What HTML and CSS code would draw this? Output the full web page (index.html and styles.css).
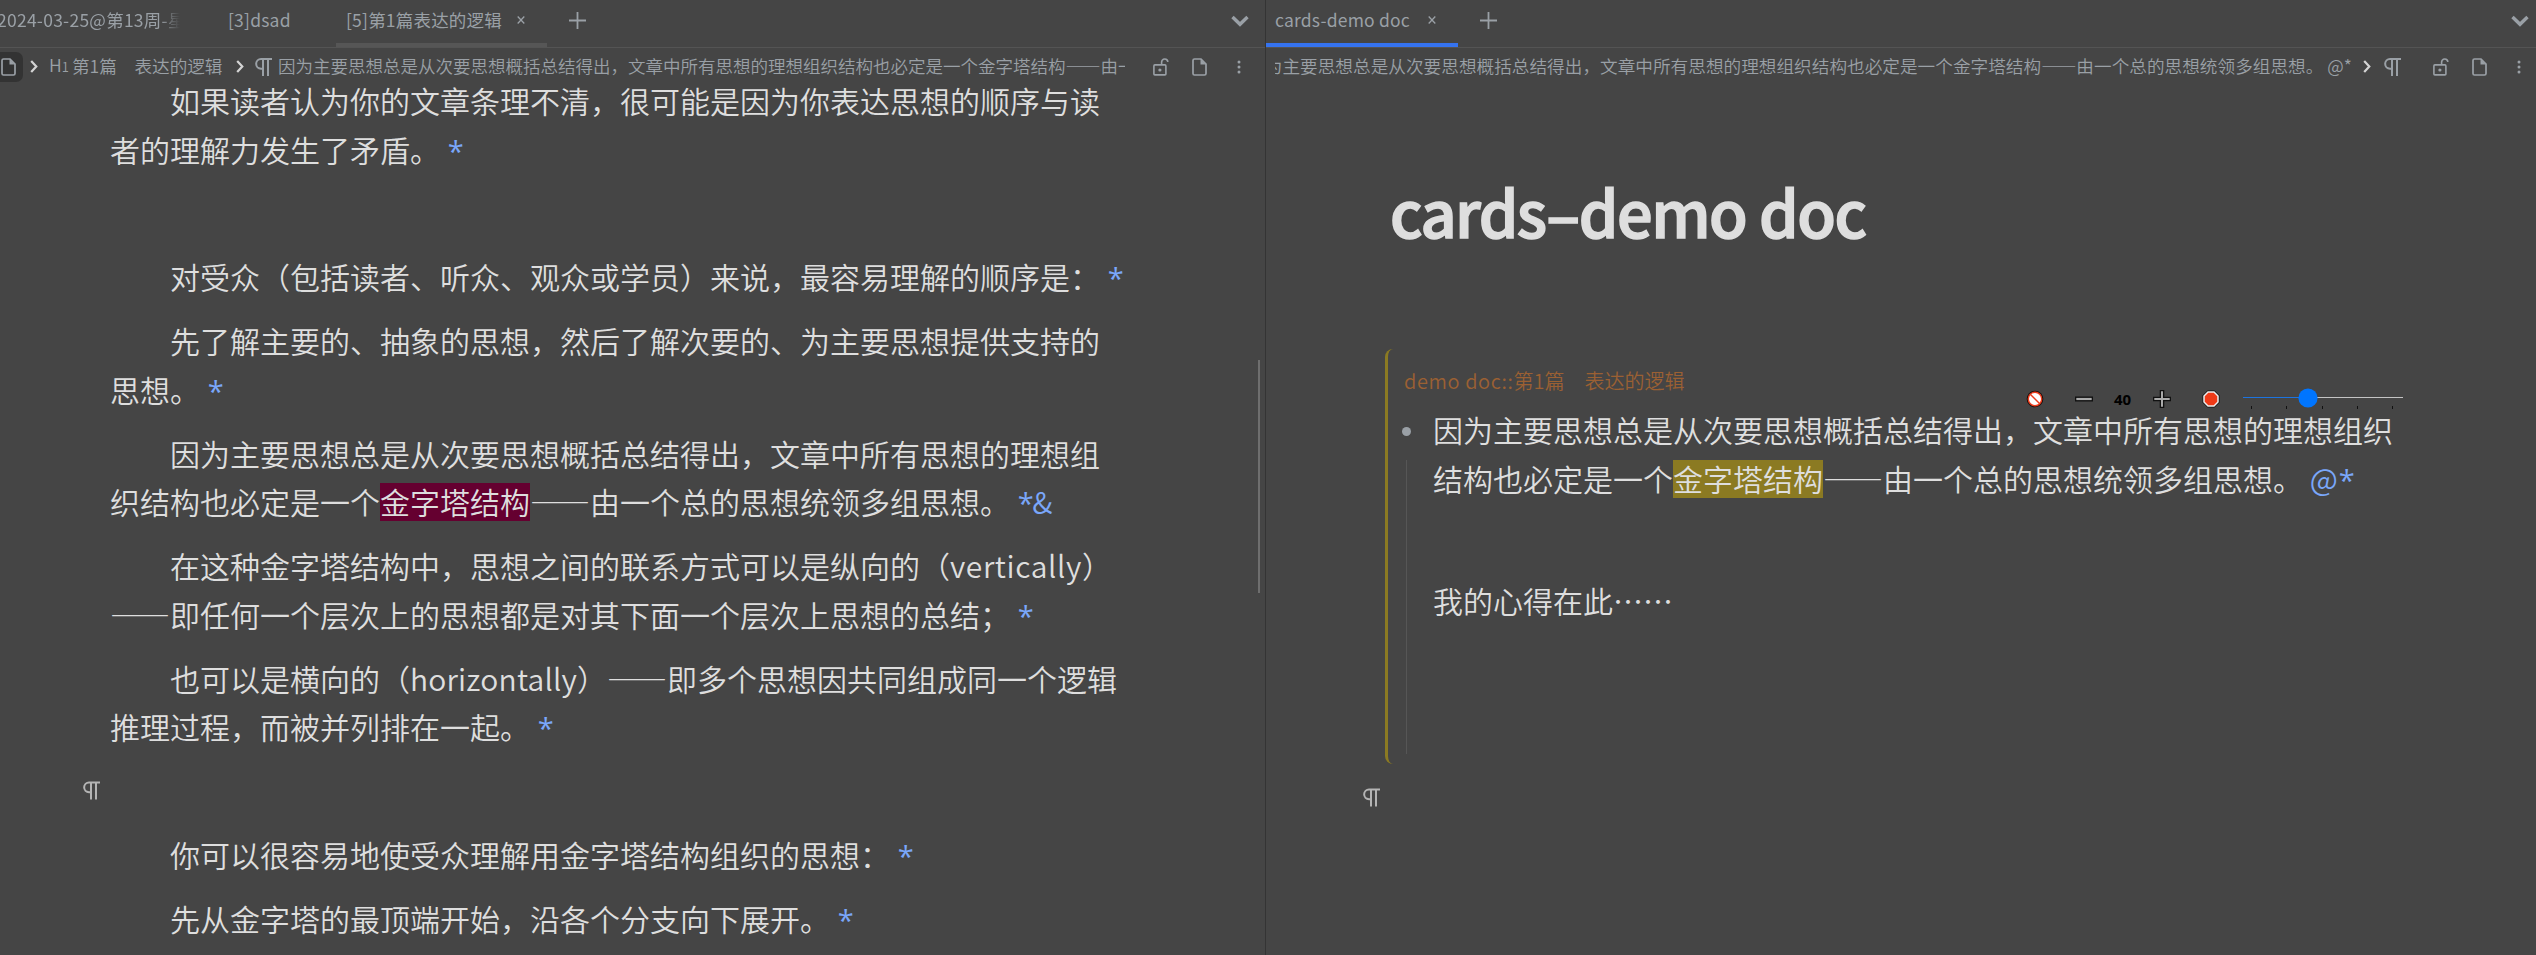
FILE: index.html
```html
<!DOCTYPE html>
<html lang="zh-CN">
<head>
<meta charset="utf-8">
<title>cards-demo doc</title>
<link rel="stylesheet" href="styles.css">
</head>
<body>
<svg class="defs" width="0" height="0">
  <symbol id="i-down" viewBox="0 0 18 12"><path d="M1.5 2 9 9.3 16.500 2" fill="none" stroke="currentColor" stroke-width="3.400"/></symbol>
  <symbol id="i-next" viewBox="0 0 8 13"><path d="M1.200 1 6.300 6.500 1.200 12" fill="none" stroke="currentColor" stroke-width="2.200"/></symbol>
  <symbol id="i-plus" viewBox="0 0 17 17"><path d="M8.500 0v17M0 8.500h17" stroke="currentColor" stroke-width="1.800"/></symbol>
  <symbol id="i-close" viewBox="0 0 8 8"><path d="M.7 .5l6.600 7M7.300 .5l-6.600 7" stroke="currentColor" stroke-width="1.300"/></symbol>
  <symbol id="i-doc" viewBox="0 0 15 18"><path d="M1 2.500Q1 1 2.500 1H9l5 5v9.500q0 1.500-1.500 1.500h-10Q1 17 1 15.500z" fill="none" stroke="currentColor" stroke-width="1.700"/><path d="M8.500 1v5.500H14z" fill="currentColor"/></symbol>
  <symbol id="i-lock" viewBox="0 0 16 18"><rect x=".9" y="6.900" width="12" height="10" rx="1" fill="none" stroke="currentColor" stroke-width="1.600"/><path d="M8.600 7V4.200A3.100 3.100 0 0 1 14.800 4" fill="none" stroke="currentColor" stroke-width="1.600"/><circle cx="6.900" cy="12" r="1.600" fill="currentColor"/></symbol>
  <symbol id="i-dots" viewBox="0 0 4 14"><circle cx="2" cy="2" r="1.500" fill="currentColor"/><circle cx="2" cy="7" r="1.500" fill="currentColor"/><circle cx="2" cy="12" r="1.500" fill="currentColor"/></symbol>
  <symbol id="i-para" viewBox="0 0 17 18"><path d="M17 1H6a4.800 4.800 0 0 0 0 9.700h1.500M8 1v17M13 1v17" fill="none" stroke="currentColor" stroke-width="2"/></symbol>
</svg>
<main class="panes">
  <section class="pane pane-left">
    <header class="tabs">
      <div class="tab tab-week"><span>2024-03-25@第13周-星</span></div>
      <div class="tab tab-dsad"><span>[3]dsad</span></div>
      <div class="tab tab-open"><span>[5]第1篇表达的逻辑</span><svg class="close"><use href="#i-close"/></svg></div>
      <svg class="plus"><use href="#i-plus"/></svg>
      <svg class="down"><use href="#i-down"/></svg>
    </header>
    <nav class="crumbs">
      <span class="chip"><svg class="doc"><use href="#i-doc"/></svg></span>
      <svg class="next"><use href="#i-next"/></svg>
      <span class="level">H<small>1</small></span>
      <span class="crumb-title">第1篇　表达的逻辑</span>
      <svg class="next"><use href="#i-next"/></svg>
      <svg class="para"><use href="#i-para"/></svg>
      <span class="crumb-text">因为主要思想总是从次要思想概括总结得出，文章中所有思想的理想组织结构也必定是一个金字塔结构——由一</span>
      <span class="tools"><svg class="lock"><use href="#i-lock"/></svg><svg class="doc"><use href="#i-doc"/></svg><svg class="dots"><use href="#i-dots"/></svg></span>
    </nav>
    <article class="text">
      <p>如果读者认为你的文章条理不清，很可能是因为你表达思想的顺序与读<br>者的理解力发生了矛盾。<a> <i>*</i></a></p>
      <p class="blank"></p>
      <p>对受众（包括读者、听众、观众或学员）来说，最容易理解的顺序是：<a> <i>*</i></a></p>
      <p>先了解主要的、抽象的思想，然后了解次要的、为主要思想提供支持的<br>思想。<a> <i>*</i></a></p>
      <p>因为主要思想总是从次要思想概括总结得出，文章中所有思想的理想组<br>织结构也必定是一个<mark class="wine">金字塔结构</mark>——由一个总的思想统领多组思想。<a> <i>*</i>&amp;</a></p>
      <p>在这种金字塔结构中，思想之间的联系方式可以是纵向的（<span class="latin">vertically</span>）<br>——即任何一个层次上的思想都是对其下面一个层次上思想的总结；<a> <i>*</i></a></p>
      <p>也可以是横向的（<span class="latin-tight">horizontally</span>）——即多个思想因共同组成同一个逻辑<br>推理过程，而被并列排在一起。<a> <i>*</i></a></p>
      <div class="gutter"><svg class="mark"><use href="#i-para"/></svg></div>
      <p>你可以很容易地使受众理解用金字塔结构组织的思想：<a> <i>*</i></a></p>
      <p>先从金字塔的最顶端开始，沿各个分支向下展开。<a> <i>*</i></a></p>
    </article>
    <i class="scrollbar"></i>
  </section>
  <section class="pane pane-right">
    <header class="tabs">
      <div class="tab tab-cards"><span>cards-demo doc</span><svg class="close"><use href="#i-close"/></svg></div>
      <svg class="plus"><use href="#i-plus"/></svg>
      <svg class="down"><use href="#i-down"/></svg>
    </header>
    <nav class="crumbs">
      <span class="crumb-text"><span>为主要思想总是从次要思想概括总结得出，文章中所有思想的理想组织结构也必定是一个金字塔结构——由一个总的思想统领多组思想。 @*</span></span>
      <svg class="next"><use href="#i-next"/></svg>
      <svg class="para"><use href="#i-para"/></svg>
      <span class="tools"><svg class="lock"><use href="#i-lock"/></svg><svg class="doc"><use href="#i-doc"/></svg><svg class="dots"><use href="#i-dots"/></svg></span>
    </nav>
    <h1>cards–demo doc</h1>
    <section class="card">
      <div class="ref"><span class="latin">demo doc::</span>第1篇　表达的逻辑</div>
      <div class="item">
        <div class="rail"><i class="bullet"></i><i class="line"></i></div>
        <div class="item-text">
          <p>因为主要思想总是从次要思想概括总结得出，文章中所有思想的理想组织<br>结构也必定是一个<mark class="olive">金字塔结构</mark>——由一个总的思想统领多组思想。<a> @<i>*</i></a></p>
          <p>我的心得在此……</p>
        </div>
      </div>
      <div class="penbar">
        <svg class="ban" viewBox="0 0 18 18"><circle cx="9" cy="9" r="8.300" fill="#1a0d0a"/><circle cx="9" cy="9" r="6.700" fill="#fff" stroke="#ee3b1b" stroke-width="1.400"/><path d="M4.500 4.500l9 9" stroke="#ee3b1b" stroke-width="1.400"/></svg>
        <svg class="step" viewBox="0 0 18 18"><path d="M0 9h18" stroke="#111" stroke-width="5"/><path d="M1.300 9h15.400" stroke="#aaa" stroke-width="2.200"/></svg>
        <b>40</b>
        <svg class="step" viewBox="0 0 18 18"><path d="M0 9h18M9 0v18" stroke="#111" stroke-width="4.600"/><path d="M1.300 9h15.400M9 1.300v15.400" stroke="#aaa" stroke-width="2"/></svg>
        <svg class="stop" viewBox="0 0 18 18"><path d="M5.500 .5h7l5 5v7l-5 5h-7l-5-5v-7z" fill="#111"/><path d="M6 2h6l4 4v6l-4 4H6l-4-4V6z" fill="#f03a17" stroke="#eee" stroke-width="1.500"/></svg>
        <svg class="slider" viewBox="0 0 160 24"><path d="M65 10.500h95" stroke="#c4c4c4"/><path d="M0 10.500h65" stroke="#1d74df"/><path d="M8.500 19v3M43.500 19v3M79.500 19v3M114.500 19v3M149.500 19v3" stroke="#111"/><circle cx="65" cy="11" r="9.600" fill="#0075ff"/></svg>
      </div>
    </section>
    <svg class="mark"><use href="#i-para"/></svg>
  </section>
</main>
</body>
</html>
```
FILE: styles.css
```css
* { box-sizing: border-box; }
html, body { margin: 0; height: 955px; overflow: hidden; background: #454545; }
body { font: 350 30px/48.75px "Noto Sans CJK SC", sans-serif; color: #dedede; text-spacing-trim: space-all; }
svg { display: block; flex: none; }
p { margin: 0; white-space: pre; }
.defs { position: absolute; }
.panes { display: grid; grid-template-columns: 1266px 1270px; height: 955px; }
.pane { position: relative; overflow: hidden; display: flex; flex-direction: column; }
.pane-left { border-right: 1px solid #343434; }

/* tab strip */
.tabs { height: 48px; flex: none; display: flex; border-bottom: 1px solid #545454; color: #9aa0a6; font-size: 17.5px; font-weight: 400; line-height: 40px; letter-spacing: 0.2px; white-space: nowrap; }
.tab { height: 47px; display: flex; flex: none; border-bottom: 4px solid transparent; overflow: hidden; }
.tab-week { width: 181px; margin-right: 36px; text-indent: -3px; letter-spacing: 0.25px; -webkit-mask-image: linear-gradient(to right, #000 160px, transparent 180px); }
.tab-dsad { width: 84px; padding-left: 11px; margin-right: 35px; }
.tab-open { width: 211px; padding-left: 10px; border-bottom-color: #565656; border-radius: 3px 3px 0 0; }
.tab-open span { width: 171px; }
.tab-cards { width: 192px; padding-left: 9px; border-bottom-color: #3573f0; }
.tab-cards span { width: 153px; }
.close { width: 8px; height: 8px; margin-top: 16px; }
.plus { width: 17px; height: 17px; margin: 12px 0 0 22px; }
.down { width: 18px; height: 12px; margin: 15px 16px 0 auto; }
.pane-right .down { margin-right: 7px; }

/* breadcrumb */
.crumbs { height: 37px; flex: none; display: flex; align-items: center; color: #9aa0a6; font-size: 17.6px; line-height: 36px; white-space: nowrap; }
.level, .crumb-title, .crumb-text { margin-top: -2px; }
.chip { width: 23px; height: 30px; display: flex; align-items: center; padding-left: 1px; border-radius: 0 7px 7px 0; background: #333; margin-right: 7px; }
.doc { width: 15px; height: 18px; }
.next { width: 8px; height: 13px; color: #d4d4d4; }
.level { width: 23px; margin-left: 11px; }
.level small { font-size: 13px; }
.crumb-title { width: 164px; }
.para { width: 17px; height: 18px; margin: 0 6px 0 11px; }
.crumb-text { width: 847px; overflow: hidden; }
.pane-left .crumb-text { font-size: 17.5px; }
.tools { display: flex; align-items: center; margin-left: 28px; }
.lock { width: 16px; height: 18px; margin-right: 23px; }
.dots { width: 4px; height: 14px; margin-left: 30px; }
.pane-right .crumb-text { width: 1077px; margin-left: 9px; direction: rtl; }
.pane-right .crumb-text span { direction: ltr; unicode-bidi: embed; letter-spacing: 0.05px; }
.pane-right .next { margin-left: 11px; }
.pane-right .para { margin-left: 13px; margin-right: 4px; }

/* document */
.text { padding: 0 0 0 110px; margin-top: -9px; }
.text p { text-indent: 60px; margin-bottom: 15px; }
.blank { height: 48.75px; }
a { color: #7aa7fa; }
a i { font: 400 29px/1 "Open Sans", sans-serif; letter-spacing: -1.5px; margin-left: 1px; }
.latin { letter-spacing: 0.6px; }
.latin-tight { letter-spacing: 0.2px; }
mark { color: inherit; display: inline-block; height: 38px; line-height: 36px; text-indent: 0; }
.wine { background: #650030; }
.olive { background: #8b7a22; }
.gutter { height: 48.75px; margin: 0 0 15px -27px; padding-top: 15px; }
.mark { width: 17px; height: 19px; color: #b4b4b4; }
.scrollbar { position: absolute; left: 1258px; top: 360px; width: 2px; height: 233px; background: #6e6e6e; }

h1 { margin: 78px 0 0 124px; font-size: 63px; line-height: 96px; font-weight: 500; letter-spacing: -1.5px; -webkit-text-stroke: 1.6px currentColor; stroke-linejoin: round; white-space: nowrap; }
.card { position: relative; width: 1040px; height: 415px; margin: 90px 0 0 119px; padding-left: 16px; border-left: 3px solid #8b7a22; border-radius: 8px; }
.ref { color: #9b6033; font-size: 20px; line-height: 30px; padding-top: 17px; white-space: nowrap; }
.item { display: flex; }
.rail { width: 29px; height: 360px; padding-top: 31px; display: flex; flex-direction: column; }
.bullet { width: 9px; height: 9px; border-radius: 50%; background: #9aa0a6; margin: 0 0 24px -2px; }
.line { width: 1px; height: 294px; margin-left: 2px; background: #565656; }
.item-text { padding-top: 9px; }
.item-text p { margin-bottom: 73px; }
.penbar { position: absolute; left: 638px; top: 37px; display: flex; height: 26px; align-items: center; }
.penbar b { width: 18px; margin: 0 21px; font: 700 15px/26px "Noto Sans", sans-serif; color: #000; }
.ban, .step, .stop { width: 18px; height: 18px; }
.ban { margin-right: 31px; }
.stop { margin: 0 23px 0 31px; }
.slider { width: 160px; height: 24px; }
.pane-right > .mark { margin: 24px 0 0 97px; }
```
